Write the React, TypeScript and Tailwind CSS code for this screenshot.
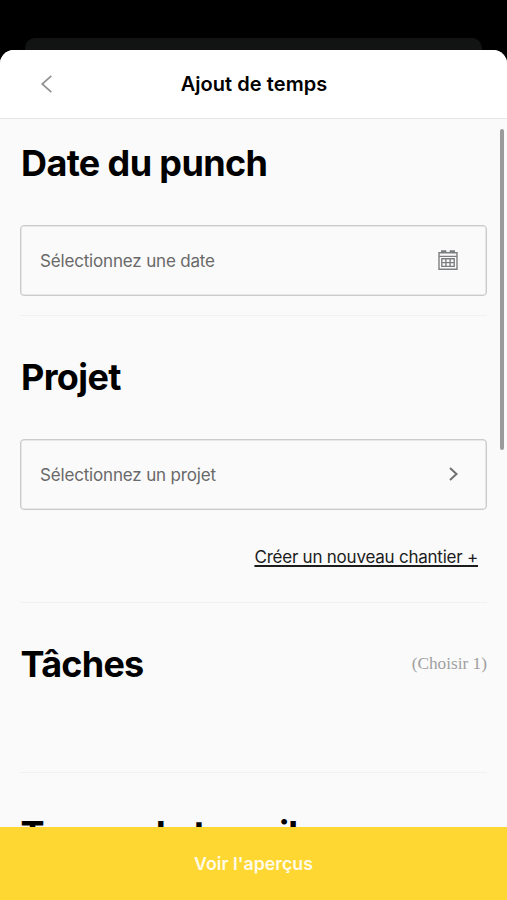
import type { ReactNode } from "react";

function Title({ children, tight = false }: { children: ReactNode; tight?: boolean }) {
  return (
    <h2
      className={`text-[36px] leading-[44px] font-bold whitespace-nowrap text-black ${
        tight ? "pl-[0.5px] tracking-[-0.75px]" : "pl-px tracking-[-0.62px]"
      }`}
    >
      {children}
    </h2>
  );
}

function Divider() {
  return <div className="h-px shrink-0 bg-[#f1f1f1]" />;
}

function Field({ label, icon }: { label: string; icon: ReactNode }) {
  return (
    <button className="mt-10 flex h-[71px] w-full items-center justify-between rounded-[4px] border-[1.5px] border-[#cbcbcb] pr-[28px] pl-[19px] text-left shadow-[inset_0_0_0_0.5px_#d4d4d4]">
      <span className="text-[17px] leading-6 tracking-[-0.17px] text-[#696969]">{label}</span>
      {icon}
    </button>
  );
}

function CalendarIcon() {
  return (
    <svg className="mb-px" width="20" height="20" viewBox="0 0 20 20" fill="none" stroke="#7c7f80" strokeWidth="1.4">
      <path d="M1 2.8h18v16.4H1zM1 6.4h18" />
      <path d="M4 2.3v-1h3.4v1M12.6 2.3v-1H16v1" strokeWidth="2" />
      <path d="M3.8 8.8h12.4v7.6H3.8zM7.9 8.8v7.6M12.1 8.8v7.6M3.8 12.6h12.4" />
    </svg>
  );
}

function ChevronRight() {
  return (
    <svg className="mb-px" width="9" height="14" viewBox="0 0 9 14" fill="none" stroke="#707070" strokeWidth="2">
      <path d="M1 1l6.5 6L1 13" />
    </svg>
  );
}

export default function App() {
  return (
    <div className="relative flex h-[900px] w-[507px] flex-col overflow-hidden bg-black font-['Inter',sans-serif]">
      <div className="flex h-[50px] shrink-0 items-end px-[25px]">
        <div className="h-3 w-full rounded-t-[10px] bg-[#121414]" />
      </div>
      <main className="flex min-h-0 flex-1 flex-col overflow-hidden rounded-t-[14px] bg-[#fafafa]">
        <header className="grid h-[69px] shrink-0 grid-cols-[80px_1fr_80px] items-center border-b-[1.5px] border-[#e6e6e6] bg-white">
          <button className="pl-[40px]" aria-label="Retour">
            <svg width="13" height="18" viewBox="0 0 13 18" fill="none" stroke="#929292" strokeWidth="1.7">
              <path d="M11.3 .8 2.2 9l9.1 8.2" />
            </svg>
          </button>
          <h1 className="pl-px text-center text-[20px] leading-6 font-semibold tracking-[0.06px] text-black">Ajout de temps</h1>
        </header>
        <div className="flex min-h-0 flex-1 flex-col overflow-hidden px-[20px] pt-[22px]">
          <section className="pb-[19px]">
            <Title>Date du punch</Title>
            <Field label="Sélectionnez une date" icon={<CalendarIcon />} />
          </section>
          <Divider />
          <section className="flex flex-col pt-[39px] pb-[33px]">
            <Title>Projet</Title>
            <Field label="Sélectionnez un projet" icon={<ChevronRight />} />
            <a className="mt-[35px] mr-[9px] self-end text-[17px] leading-6 tracking-[-0.23px] text-[#1c1c1c] underline decoration-[1.5px] underline-offset-[2px]">
              Créer un nouveau chantier +
            </a>
          </section>
          <Divider />
          <section className="flex items-center justify-between pt-[39px] pb-[86px]">
            <Title tight>Tâches</Title>
            <span className="font-['Liberation_Serif',serif] text-[17.3px] leading-6 text-[#a0a0a0]">(Choisir 1)</span>
          </section>
          <Divider />
          <section className="pt-[39px]">
            <Title tight>Temps de travail</Title>
          </section>
        </div>
        <button className="h-[73px] shrink-0 bg-[#fed732] pt-px text-center text-[17.8px] font-semibold text-[#fffbe8]">
          Voir l'aperçus
        </button>
      </main>
      <div className="absolute top-[129px] right-[3px] h-[321px] w-[4px] rounded-full bg-[#9b9b9b]" />
    </div>
  );
}
